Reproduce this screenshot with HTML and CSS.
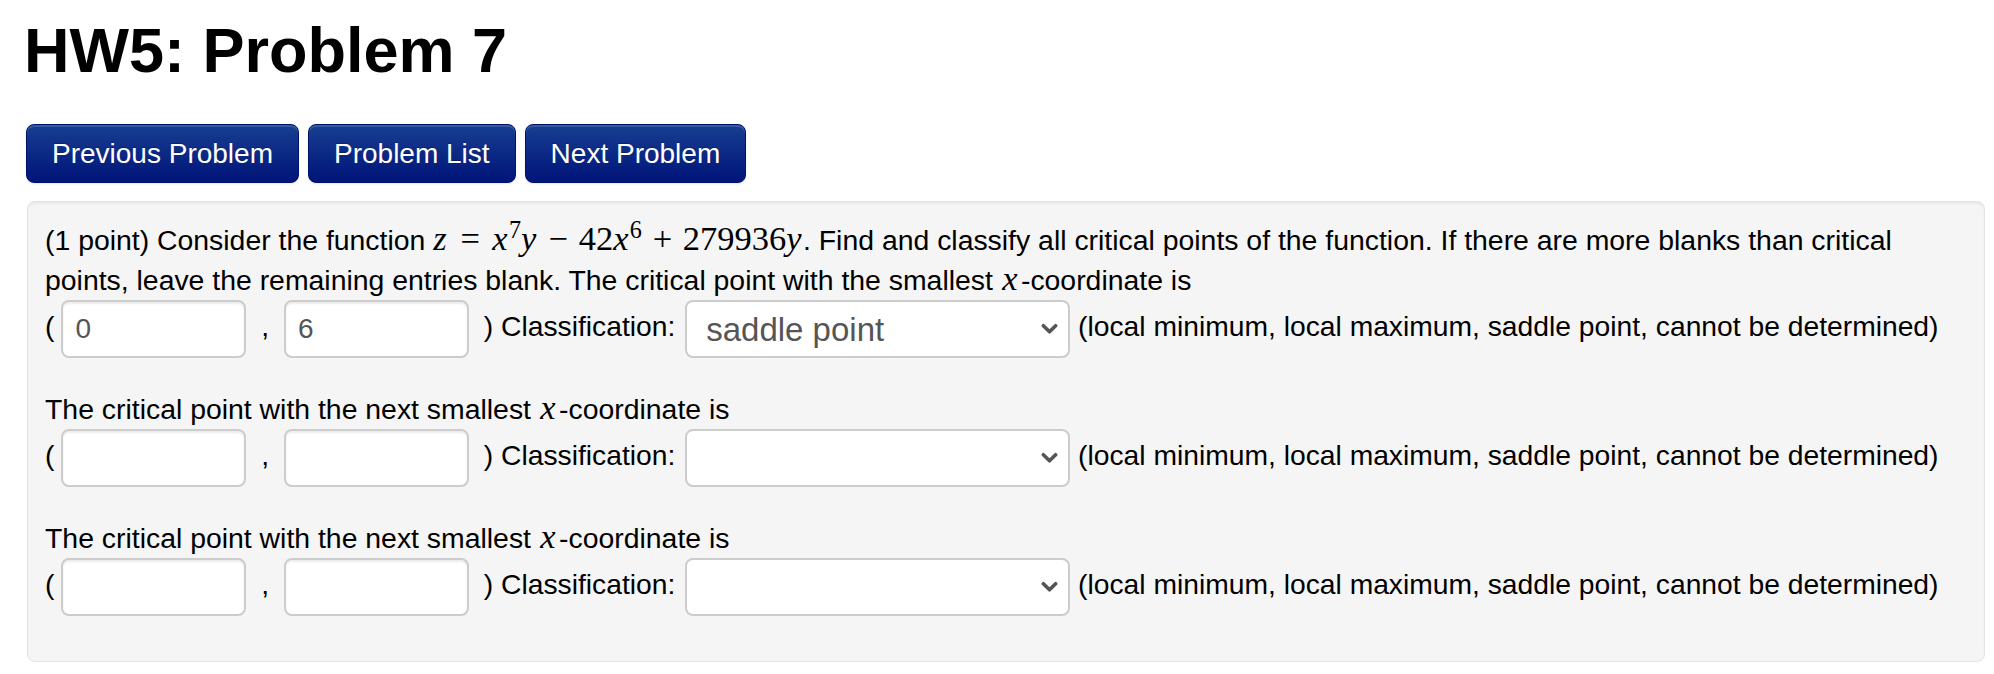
FILE: index.html
```html
<!DOCTYPE html>
<html lang="en">
<head>
<meta charset="utf-8">
<title>HW5: Problem 7</title>
<link rel="stylesheet" href="styles.css">
</head>
<body>
<div class="page">
  <h1 class="title">HW5: Problem 7</h1>
  <nav class="nav">
    <button class="btn" type="button">Previous Problem</button>
    <button class="btn" type="button">Problem List</button>
    <button class="btn" type="button">Next Problem</button>
  </nav>
  <div class="problem">
    <p class="prompt">(1 point) Consider the function <span class="math"><i class="v">z</i><span class="rel">=</span><i class="v">x</i><sup>7</sup><i class="v">y</i><span class="bin">−</span>42<i class="v">x</i><sup>6</sup><span class="bin">+</span>279936<i class="v">y</i></span>. Find and classify all critical points of the function. If there are more blanks than critical<br>points, leave the remaining entries blank. The critical point with the smallest <i class="mv">x</i>-coordinate is</p>
    <div class="answer-row">(<input class="ans" type="text" value="0"> , <input class="ans" type="text" value="6"> ) Classification: <span class="select-wrap"><select class="cls"><option>saddle point</option><option>local minimum</option><option>local maximum</option><option>cannot be determined</option></select><svg class="chev" viewBox="0 0 18 12" aria-hidden="true"><path d="M2.5 2.5 L9 9 L15.5 2.5" fill="none" stroke="#555" stroke-width="3.8" stroke-linecap="round" stroke-linejoin="round"/></svg></span> (local minimum, local maximum, saddle point, cannot be determined)</div>

    <p class="prompt spaced">The critical point with the next smallest <i class="mv">x</i>-coordinate is</p>
    <div class="answer-row">(<input class="ans" type="text" value=""> , <input class="ans" type="text" value=""> ) Classification: <span class="select-wrap"><select class="cls"><option></option><option>local minimum</option><option>local maximum</option><option>saddle point</option><option>cannot be determined</option></select><svg class="chev" viewBox="0 0 18 12" aria-hidden="true"><path d="M2.5 2.5 L9 9 L15.5 2.5" fill="none" stroke="#555" stroke-width="3.8" stroke-linecap="round" stroke-linejoin="round"/></svg></span> (local minimum, local maximum, saddle point, cannot be determined)</div>

    <p class="prompt spaced">The critical point with the next smallest <i class="mv">x</i>-coordinate is</p>
    <div class="answer-row">(<input class="ans" type="text" value=""> , <input class="ans" type="text" value=""> ) Classification: <span class="select-wrap"><select class="cls"><option></option><option>local minimum</option><option>local maximum</option><option>saddle point</option><option>cannot be determined</option></select><svg class="chev" viewBox="0 0 18 12" aria-hidden="true"><path d="M2.5 2.5 L9 9 L15.5 2.5" fill="none" stroke="#555" stroke-width="3.8" stroke-linecap="round" stroke-linejoin="round"/></svg></span> (local minimum, local maximum, saddle point, cannot be determined)</div>
  </div>
</div>
</body>
</html>
```
FILE: styles.css
```css
* { box-sizing: border-box; }

body {
  margin: 0;
  background: #fff;
  color: #000;
  font-family: "Liberation Sans", Arial, Helvetica, sans-serif;
}

.page {
  padding: 13px 9px 0 26px;
}

.title {
  margin: 0 0 0 -2px;
  font-size: 63px;
  font-weight: bold;
  line-height: 74px;
}

.nav {
  display: flex;
  gap: 9px;
  margin-top: 37px;
}

.btn {
  height: 59px;
  padding: 0 25px;
  font-family: inherit;
  font-size: 28px;
  color: #fff;
  border: 1px solid #00136b;
  border-radius: 8px;
  background: linear-gradient(#173e90, #001479);
  box-shadow: inset 0 2px 0 rgba(255, 255, 255, 0.15), 0 1px 2px rgba(0, 0, 0, 0.1);
  text-shadow: 0 -1px 0 rgba(0, 0, 0, 0.25);
}

.problem {
  margin: 18px 0 0 1px;
  padding: 18px 17px 45px;
  background: #f5f5f5;
  border: 1px solid #e3e3e3;
  border-radius: 8px;
  box-shadow: inset 0 2px 2px rgba(0, 0, 0, 0.05);
}

.prompt {
  margin: 0;
  font-size: 28.4px;
  line-height: 40px;
  white-space: nowrap;
}

.prompt.spaced {
  margin-top: 31px;
}

.answer-row {
  font-size: 28.25px;
  line-height: 40px;
  white-space: nowrap;
}

.math,
.mv {
  font-family: "Liberation Serif", "Times New Roman", serif;
  font-size: 34.5px;
  line-height: 0;
}

.math i,
.mv {
  font-style: italic;
}

.mv {
  margin: 0 0.1em 0 0.04em;
}

.math .v {
  margin-right: 0.04em;
}

.math sup {
  font-size: 0.7em;
  line-height: 0;
  vertical-align: 0.5em;
}

.rel {
  margin: 0 0.36em;
}

.bin {
  margin: 0 0.31em;
}

.ans {
  width: 185px;
  height: 58px;
  margin: 0 7px;
  padding: 0 12px;
  vertical-align: middle;
  font-family: "Liberation Sans", Arial, sans-serif;
  font-size: 28px;
  color: #555;
  background: #fff;
  border: 2px solid #ccc;
  border-radius: 8px;
  box-shadow: inset 0 2px 2px rgba(0, 0, 0, 0.075);
}

.select-wrap {
  position: relative;
  display: inline-block;
  vertical-align: middle;
  margin: 0 0 0 2px;
  line-height: 0;
}

.cls {
  -webkit-appearance: none;
  appearance: none;
  width: 385px;
  height: 58px;
  padding: 0 40px 0 19px;
  font-family: "Liberation Sans", Arial, sans-serif;
  font-size: 33px;
  color: #555;
  background: #fff;
  border: 2px solid #ccc;
  border-radius: 8px;
}

.chev {
  position: absolute;
  right: 12px;
  top: 23px;
  width: 17px;
  height: 12px;
  pointer-events: none;
}
```
